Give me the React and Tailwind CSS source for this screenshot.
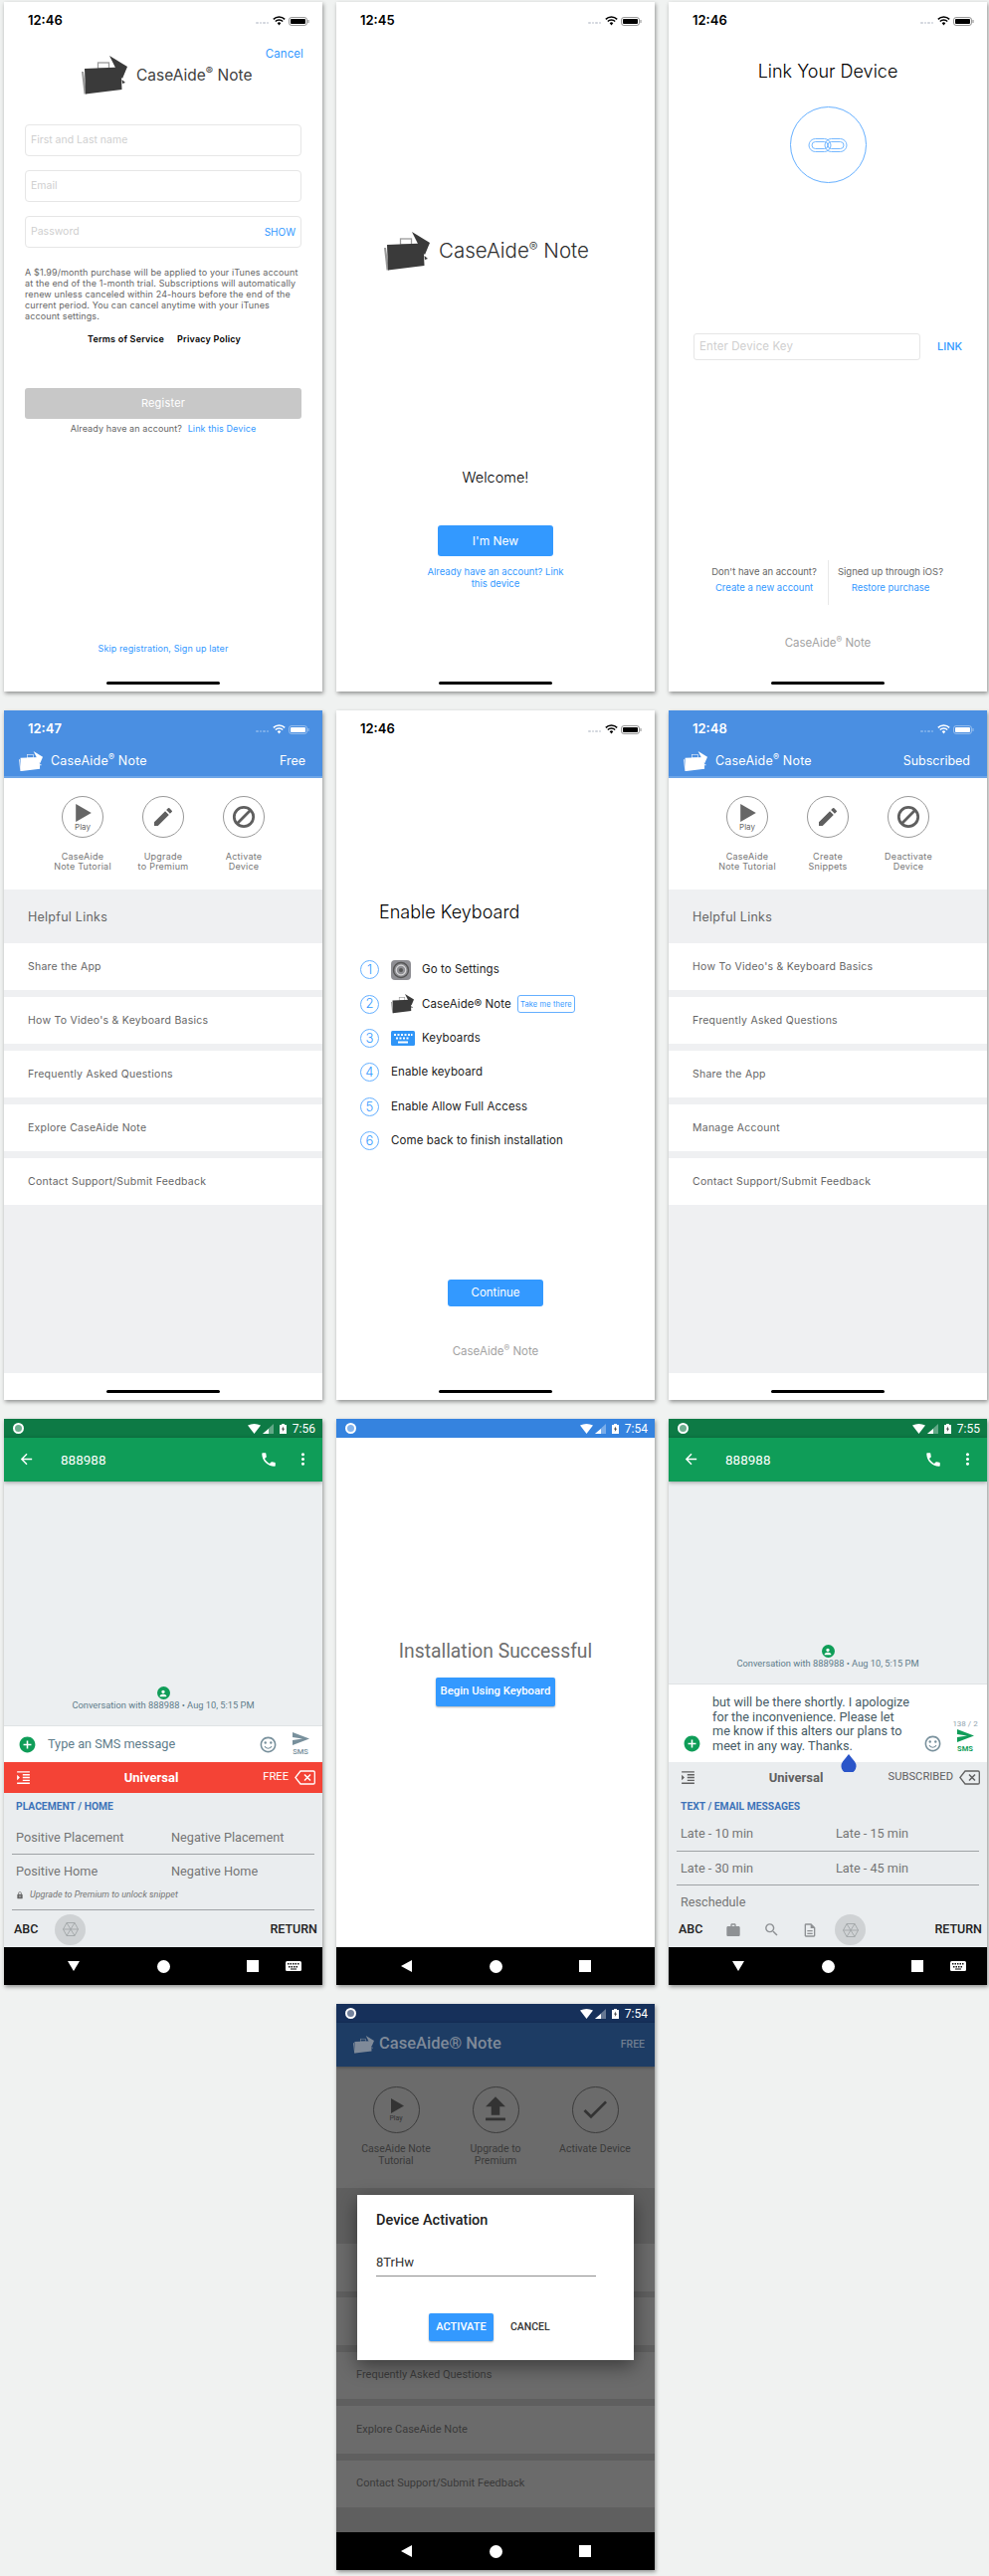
import {
  MdArrowBack,
  MdPhone,
  MdMoreVert,
  MdAddCircle,
  MdSend,
  MdLock,
  MdWork,
  MdSearch,
  MdOutlineDescription,
  MdEdit,
  MdFileUpload,
  MdCheck,
  MdPerson,
  MdFormatIndentIncrease,
  MdOutlineSentimentSatisfiedAlt,
} from "react-icons/md";

const ios = "font-['Inter','Liberation_Sans',sans-serif]";
const droid = "font-['Roboto','Liberation_Sans',sans-serif]";

function Logo({ color = "#3a3a3a", back = "#9a9a9a", w = 46 }) {
  return (
    <svg width={w} height={(w * 39) / 46} viewBox="0 0 46 39" className="shrink-0">
      <polygon points="28,0 46,11 41,23 38,20" fill={color} />
      <polygon points="40.5,24 44,27 41,28" fill={color} />
      <rect x="16.5" y="7" width="11" height="6" fill="none" stroke={back} strokeWidth="1.3" />
      <polygon points="0,16 2,16 5,38.5 2.5,38.5" fill={back} />
      <polygon points="3,13 39.5,11.5 40.5,34 4,38.5" fill={color} />
    </svg>
  );
}

function IosStatus({ time, dark = true }) {
  const c = dark ? "#000" : "#fff";
  return (
    <div className={`flex h-[38px] shrink-0 items-center pl-[24px] pr-[13px] ${ios}`}>
      <span className="text-[13px] font-semibold" style={{ color: c }}>
        {time}
      </span>
      <div className="ml-auto flex items-center">
        <div className="mt-[3px] flex gap-[1px]">
          {[0, 1, 2, 3].map((i) => (
            <span key={i} className={`h-[2px] w-[2.5px] rounded-full ${dark ? "bg-gray-300" : "bg-white/30"}`} />
          ))}
        </div>
        <svg width="13" height="10" viewBox="0 0 13 10" className="ml-[4px]">
          <path d="M0.8 3.4a8 8 0 0 1 11.4 0M2.8 5.5a5.2 5.2 0 0 1 7.4 0" fill="none" stroke={c} strokeWidth="1.5" />
          <path d="M4.7 7.2a2.6 2.6 0 0 1 3.6 0L6.5 9.4z" fill={c} />
        </svg>
        <svg width="21" height="9" viewBox="0 0 21 9" className="ml-[3px]">
          <rect x="0.5" y="0.5" width="18" height="8" rx="2.5" fill="none" stroke={c} strokeOpacity="0.4" />
          <rect x="2" y="2" width="15" height="5" rx="1" fill={c} />
          <rect x="19.4" y="3" width="1.2" height="3" rx="0.5" fill={c} fillOpacity="0.4" />
        </svg>
      </div>
    </div>
  );
}

function HomeBar() {
  return <div className="mx-auto mb-[7px] mt-auto h-[3px] w-[114px] shrink-0 rounded-full bg-black" />;
}

function Screen({ h, children, className = "" }) {
  return (
    <div
      className={`relative flex w-[320px] flex-col overflow-hidden bg-white shadow-[1px_2px_4px_rgba(0,0,0,0.4)] ${className}`}
      style={{ height: h }}
    >
      {children}
    </div>
  );
}

function TextInput({ label, right, className = "" }) {
  return (
    <div className={`flex h-[32px] items-center rounded-[4px] border border-[#e6e6e6] px-[5px] text-[10.5px] text-[#cfcfcf] ${className}`}>
      {label}
      {right}
    </div>
  );
}

function RegisterScreen() {
  return (
    <Screen h={693} className={ios}>
      <IosStatus time="12:46" />
      <div className="mt-[6px] h-[16px] pr-[19px] text-right text-[11.5px] leading-[16px] tracking-[0.1px] text-[#3399ff]">Cancel</div>
      <div className="-mt-[6px] ml-[78px] flex items-center gap-[9px]">
        <Logo />
        <span className="text-[15.5px] text-[#3f3f3f]">
          CaseAide<sup className="text-[11px]">®</sup> Note
        </span>
      </div>
      <div className="mt-[30px] flex flex-col gap-[14px] px-[21px]">
        <TextInput label="First and Last name" />
        <TextInput label="Email" />
        <TextInput
          label="Password"
          right={<span className="ml-auto text-[10px] text-[#3399ff]">SHOW</span>}
        />
      </div>
      <p className="mt-[19px] whitespace-nowrap px-[21px] text-[9px] leading-[11px] tracking-[0.12px] text-[#666]">
        A $1.99/month purchase will be applied to your iTunes account
        <br />
        at the end of the 1-month trial. Subscriptions will automatically
        <br />
        renew unless canceled within 24-hours before the end of the
        <br />
        current period. You can cancel anytime with your iTunes
        <br />
        account settings.
      </p>
      <div className="mt-[11.5px] flex h-[11px] pl-[84px] text-[9px] font-semibold leading-[11px] tracking-[0.2px] text-black">
        <span>Terms of Service</span>
        <span className="ml-[13px]">Privacy Policy</span>
      </div>
      <div className="mx-[21px] mt-[44.5px] flex h-[30.5px] items-center justify-center rounded-[3px] bg-[#c8c8c8] text-[11px] tracking-[0.2px] text-white">
        Register
      </div>
      <div className="mt-[4.5px] h-[12px] text-center text-[9px] leading-[12px] tracking-[0.1px] text-[#666]">
        Already have an account? <span className="ml-[3px] text-[#3399ff]">Link this Device</span>
      </div>
      <div className="mt-[209px] h-[12px] text-center text-[9px] leading-[12px] tracking-[0.1px] text-[#3399ff]">
        Skip registration, Sign up later
      </div>
      <HomeBar />
    </Screen>
  );
}

function WelcomeScreen() {
  return (
    <Screen h={693} className={ios}>
      <IosStatus time="12:45" />
      <div className="ml-[48px] mt-[193px] flex items-center gap-[9px]">
        <Logo />
        <span className="text-[20.5px] font-light text-[#2e2e2e]">
          CaseAide<sup className="text-[13px]">®</sup> Note
        </span>
      </div>
      <div className="mt-[198px] h-[20px] text-center text-[14.5px] font-light leading-[20px] text-black">Welcome!</div>
      <div className="mx-auto mt-[38px] flex h-[31px] w-[116px] items-center justify-center rounded-[3px] bg-[#3399ff] text-[12px] text-white">
        I'm New
      </div>
      <div className="mx-auto mt-[10px] w-[150px] text-center text-[9.5px] leading-[11.5px] text-[#3399ff]">
        Already have an account? Link
        <br />
        this device
      </div>
      <HomeBar />
    </Screen>
  );
}

function LinkScreen() {
  return (
    <Screen h={693} className={ios}>
      <IosStatus time="12:46" />
      <div className="mt-[20px] h-[24px] text-center text-[18px] font-light leading-[24px] text-black">Link Your Device</div>
      <div className="mx-auto mt-[23px] flex h-[77px] w-[77px] items-center justify-center rounded-full border border-[#66b0ff]">
        <svg width="40" height="18" viewBox="0 0 40 18" fill="none" stroke="#66b0ff" strokeWidth="0.9">
          <rect x="1" y="2.5" width="22" height="13" rx="6.5" />
          <rect x="4" y="5.5" width="16" height="7" rx="3.5" />
          <rect x="17" y="2.5" width="22" height="13" rx="6.5" />
          <rect x="20" y="5.5" width="16" height="7" rx="3.5" />
        </svg>
      </div>
      <div className="ml-[25px] mt-[151px] flex items-center gap-[17px]">
        <div className="flex h-[27px] w-[228px] items-center rounded-[3px] border border-[#e6e6e6] px-[5px] text-[11.5px] tracking-[0.1px] text-[#cfcfcf]">
          Enter Device Key
        </div>
        <span className="text-[11px] font-medium text-[#3399ff]">LINK</span>
      </div>
      <div className="mt-[201px] flex h-[45px] text-[9.5px] leading-[12px]">
        <div className="ml-[32px] w-[128px] pt-[6px] text-center">
          <div className="text-[#666]">Don't have an account?</div>
          <div className="mt-[4px] text-[#3399ff]">Create a new account</div>
        </div>
        <div className="w-[1px] bg-[#e8e8e8]" />
        <div className="w-[124px] pt-[6px] text-center">
          <div className="text-[#666]">Signed up through iOS?</div>
          <div className="mt-[4px] text-[#3399ff]">Restore purchase</div>
        </div>
      </div>
      <div className="mt-[31px] h-[14px] text-center text-[11.5px] leading-[14px] text-[#a3a3a3]">
        CaseAide<sup className="text-[8.5px]">®</sup> Note
      </div>
      <HomeBar />
    </Screen>
  );
}

function PlayCircle({ size = 42, small = false, line = "#999", fill = "#666" }) {
  return (
    <div
      className="flex flex-col items-center justify-center rounded-full border"
      style={{ width: size, height: size, borderColor: line }}
    >
      <svg width={small ? 13 : 16} height={small ? 15 : 18} viewBox="0 0 13 15" className="ml-[2px] mt-[2px]">
        <polygon points="0,0 13,7.5 0,15" fill={fill} />
      </svg>
      <span className={`${small ? "text-[7px]" : "text-[8px]"} leading-[10px]`} style={{ color: fill }}>
        Play
      </span>
    </div>
  );
}

function RoundIcon({ children, size = 42, line = "#999" }) {
  return (
    <div
      className="flex items-center justify-center rounded-full border"
      style={{ width: size, height: size, borderColor: line }}
    >
      {children}
    </div>
  );
}

function BlockIcon() {
  return (
    <svg width="24" height="24" viewBox="0 0 26 26" fill="none" stroke="#5f5f5f" strokeWidth="3">
      <circle cx="13" cy="13" r="10.5" />
      <line x1="20" y1="6" x2="6" y2="20" />
    </svg>
  );
}

function HomeScreen({ time, badge, tools, links }) {
  return (
    <Screen h={693} className={ios}>
      <div className="h-[68px] shrink-0 border-b-[2px] border-[#6ea6e8] bg-[#4a8fe2]">
        <IosStatus time={time} dark={false} />
        <div className="flex h-[26px] items-center pl-[15px] pr-[17px] text-white">
          <Logo color="#fff" back="#dfe9f7" w={24} />
          <span className="ml-[8px] text-[12.5px] tracking-[0.2px]">
            CaseAide<sup className="text-[9px]">®</sup> Note
          </span>
          <span className="ml-auto text-[12.5px]">{badge}</span>
        </div>
      </div>
      <div className="flex h-[112px] shrink-0 justify-center pt-[18px]">
        {tools.map((tool) => (
          <div key={tool.label[0]} className="flex w-[81px] flex-col items-center">
            {tool.icon}
            <div className="mt-[13.5px] whitespace-nowrap text-center text-[9px] leading-[10.7px] tracking-[0.25px] text-[#777]">
              {tool.label[0]}
              <br />
              {tool.label[1]}
            </div>
          </div>
        ))}
      </div>
      <div className="flex flex-1 flex-col bg-[#eff0f2]">
        <div className="flex h-[54px] shrink-0 items-center pl-[24px] pt-[2px] text-[12.5px] tracking-[0.25px] text-[#666]">
          Helpful Links
        </div>
        {links.map((link) => (
          <div
            key={link}
            className="mb-[7.5px] flex h-[46.5px] shrink-0 items-center bg-white pl-[24px] pt-[2px] text-[10.5px] tracking-[0.25px] text-[#666]"
          >
            {link}
          </div>
        ))}
      </div>
      <div className="flex h-[27px] shrink-0 bg-white">
        <HomeBar />
      </div>
    </Screen>
  );
}

function StepBadge({ n }) {
  return (
    <div className="flex h-[19px] w-[19px] shrink-0 items-center justify-center rounded-full border border-[#66b0ff] text-[13px] font-light text-[#3399ff]">
      {n}
    </div>
  );
}

function SettingsIcon() {
  return (
    <svg width="20" height="20" viewBox="0 0 20 20" fill="none">
      <rect width="20" height="20" rx="4" fill="#8e8e93" />
      <circle cx="10" cy="10" r="7.5" stroke="#555" strokeWidth="1.4" />
      <circle cx="10" cy="10" r="4.8" stroke="#d8d8d8" strokeWidth="1.2" />
      <circle cx="10" cy="10" r="2" fill="#555" />
    </svg>
  );
}

function KeysIcon() {
  return (
    <svg width="24" height="15" viewBox="0 0 24 15">
      <rect width="24" height="15" rx="1.5" fill="#2f95f7" />
      <path d="M3 3h2v2H3zM6.5 3h2v2h-2zM10 3h2v2h-2zM13.5 3h2v2h-2zM17 3h2v2h-2zM20 3h1.5v2H20zM5 6.5h2v2H5zM8.5 6.5h2v2h-2zM12 6.5h2v2h-2zM15.5 6.5h2v2h-2zM7 10.5h10v2H7z" fill="#fff" />
    </svg>
  );
}

function KeyboardGuideScreen() {
  const steps = [
    { text: "Go to Settings", icon: <SettingsIcon /> },
    { text: "CaseAide® Note", icon: <Logo w={23} />, tag: true },
    { text: "Keyboards", icon: <KeysIcon /> },
    { text: "Enable keyboard" },
    { text: "Enable Allow Full Access" },
    { text: "Come back to finish installation" },
  ];
  return (
    <Screen h={693} className={ios}>
      <IosStatus time="12:46" />
      <div className="ml-[43px] mt-[153px] h-[24px] text-[18px] font-light leading-[24px] text-black">Enable Keyboard</div>
      <div className="ml-[24px] mt-[28.6px] flex flex-col">
        {steps.map((step, i) => (
          <div key={step.text} className="flex h-[34.4px] items-center text-[11.5px] tracking-[0.1px] text-[#222]">
            <StepBadge n={i + 1} />
            <div className="ml-[12px] flex items-center">
              {step.icon && <div className="w-[31px] shrink-0">{step.icon}</div>}
              <span>{step.text}</span>
              {step.tag && (
                <span className="ml-[6px] flex h-[18px] w-[58px] items-center justify-center rounded-[3px] border border-[#66b0ff] text-[7.5px] text-[#3399ff]">
                  Take me there
                </span>
              )}
            </div>
          </div>
        ))}
      </div>
      <div className="mx-auto mt-[122px] flex h-[27px] w-[96px] items-center justify-center rounded-[3px] bg-[#3399ff] text-[11.5px] text-white">
        Continue
      </div>
      <div className="mt-[38px] h-[14px] text-center text-[11.5px] leading-[14px] text-[#a3a3a3]">
        CaseAide<sup className="text-[8.5px]">®</sup> Note
      </div>
      <HomeBar />
    </Screen>
  );
}

function DroidStatus({ time, bg }) {
  return (
    <div className={`flex h-[19px] shrink-0 items-center pl-[9px] pr-[7px] ${bg} ${droid}`}>
      <div className="h-[11px] w-[11px] rounded-full border-[2.5px] border-white bg-white/40" />
      <div className="ml-auto flex items-center">
        <svg width="13" height="10" viewBox="0 0 13 10">
          <path d="M0 1.5Q6.5 -1.5 13 1.5L6.5 10z" fill="#fff" />
        </svg>
        <svg width="11" height="10" viewBox="0 0 11 10" className="ml-[2px]">
          <polygon points="11,0 11,10 0,10" fill="#fff" fillOpacity="0.35" />
          <polygon points="6,5 6,10 0,10" fill="#fff" />
        </svg>
        <svg width="7" height="10" viewBox="0 0 7 10" className="ml-[6px]">
          <path d="M2 0h3v1h2v9H0V1h2z" fill="#fff" />
          <path d="M4 2.5 2 5.5h1.3L2.8 8l2.2-3.2H3.700z" fill="#333" />
        </svg>
        <span className="ml-[6px] text-[12px] text-white">{time}</span>
      </div>
    </div>
  );
}

function DroidNav({ keyboard = false }) {
  return (
    <div className="flex h-[38px] shrink-0 items-center bg-black">
      <div className="ml-[64px] flex w-[12px] justify-center">
        {keyboard ? (
          <svg width="12" height="10" viewBox="0 0 12 10">
            <polygon points="0,0 12,0 6,10" fill="#fff" />
          </svg>
        ) : (
          <svg width="11" height="12" viewBox="0 0 11 12">
            <polygon points="11,0 11,12 0,6" fill="#fff" />
          </svg>
        )}
      </div>
      <div className="ml-[77.5px] h-[13px] w-[13px] rounded-full bg-white" />
      <div className="ml-[77.5px] h-[12px] w-[12px] bg-white" />
      {keyboard && (
        <svg width="16" height="10" viewBox="0 0 16 10" className="ml-[27px]">
          <rect width="16" height="10" rx="1.5" fill="#fff" />
          <path d="M2 2h1.5v1.5H2zM4.5 2H6v1.5H4.500zM7 2h1.5v1.5H7zM9.500 2H11v1.5H9.500zM12 2h1.5v1.5H12zM3 5h1.5v1.5H3zM5.500 5H7v1.5H5.500zM8 5h1.5v1.5H8zM10.500 5H12v1.5h-1.5zM5 7.500h6v1H5z" fill="#111" />
        </svg>
      )}
    </div>
  );
}

function Backspace({ color }) {
  return (
    <svg width="21" height="15" viewBox="0 0 21 15" fill="none" stroke={color} strokeWidth="1.3">
      <path d="M6 1h13a1.3 1.3 0 0 1 1.3 1.3v10.400A1.3 1.3 0 0 1 19 14H6L0.900 7.500z" />
      <path d="M10 4.500l6 6M16 4.500l-6 6" strokeWidth="1.5" />
    </svg>
  );
}

function Hex() {
  return (
    <div className="flex h-[31px] w-[31px] shrink-0 items-center justify-center rounded-full bg-[#cfd2d4]">
      <svg width="16" height="14" viewBox="0 0 16 14" fill="none" stroke="#a2a6a8" strokeWidth="0.9">
        <polygon points="4,0.5 12,0.5 15.5,7 12,13.5 4,13.5 0.5,7" />
        <path d="M4 0.5 12 13.5M12 0.5 4 13.5M0.5 7h15" />
      </svg>
    </div>
  );
}

function Conversation() {
  return (
    <div className="flex flex-1 flex-col items-center justify-end bg-[#eceff1] pb-[14px]">
      <div className="flex h-[13px] w-[13px] items-center justify-center rounded-full bg-[#0f9d58]">
        <MdPerson size={10} color="#fff" />
      </div>
      <div className="h-[12px] text-[9.3px] leading-[12px] text-[#607d8b]">Conversation with 888988 • Aug 10, 5:15 PM</div>
    </div>
  );
}

function SmsHeader() {
  return (
    <div className="z-10 flex h-[43.5px] shrink-0 items-center bg-[#0f9d58] pl-[14px] pr-[10px] shadow-[0_1px_4px_rgba(0,0,0,0.35)]">
      <MdArrowBack size={17} color="#fff" />
      <span className="ml-[26px] text-[13.5px] text-white">888988</span>
      <MdPhone size={18} color="#fff" className="ml-auto" />
      <MdMoreVert size={19} color="#fff" className="ml-[16px]" />
    </div>
  );
}

function SnippetCell({ text }) {
  return <div className="h-[16px] text-[12.7px] leading-[16px] text-[#757575]">{text}</div>;
}

function FreeKeyboardScreen() {
  return (
    <Screen h={569} className={droid}>
      <DroidStatus time="7:56" bg="bg-[#0d7a45]" />
      <SmsHeader />
      <Conversation />
      <div className="flex h-[37px] shrink-0 items-center border-t border-[#dfe3e5] bg-white pl-[14px] pr-[13px]">
        <MdAddCircle size={19} color="#0f9d58" />
        <span className="ml-[11px] text-[12.7px] text-[#607d8b]">Type an SMS message</span>
        <MdOutlineSentimentSatisfiedAlt size={19} color="#78909c" className="ml-auto" />
        <div className="ml-[14px] flex w-[18px] flex-col items-center">
          <svg width="17" height="13" viewBox="0 0 17 13">
            <polygon points="0,0 17,6.5 0,13 0,8 10,6.5 0,5" fill="#78909c" />
          </svg>
          <span className="mt-[2px] text-[7.5px] font-medium leading-[9px] text-[#78909c]">SMS</span>
        </div>
      </div>
      <div className="flex h-[31px] shrink-0 items-center bg-[#f44336] pl-[11px] pr-[7px] text-white">
        <MdFormatIndentIncrease size={17} />
        <span className="ml-[85px] w-[70px] text-center text-[13px] font-bold">Universal</span>
        <span className="ml-auto text-[11.2px]">FREE</span>
        <div className="ml-[6px]">
          <Backspace color="#fff" />
        </div>
      </div>
      <div className="flex h-[155px] shrink-0 flex-col bg-[#eaedef] pt-[8px]">
        <div className="h-[12px] pl-[12px] text-[10.3px] font-bold leading-[12px] text-[#3d73b9]">PLACEMENT / HOME</div>
        <div className="mt-[16.5px] grid grid-cols-[156px_1fr] pl-[12px]">
          <SnippetCell text="Positive Placement" />
          <SnippetCell text="Negative Placement" />
        </div>
        <div className="mx-[8px] mt-[8.5px] h-[1px] shrink-0 bg-[#9ea2a5]" />
        <div className="mt-[9px] grid grid-cols-[156px_1fr] pl-[12px]">
          <SnippetCell text="Positive Home" />
          <SnippetCell text="Negative Home" />
        </div>
        <div className="mt-[9.5px] flex h-[12px] items-center pl-[12px] text-[9px] italic text-[#757575]">
          <MdLock size={8} color="#666" />
          <span className="ml-[6px]">Upgrade to Premium to unlock snippet</span>
        </div>
        <div className="mx-[8px] mt-[8px] h-[1px] shrink-0 bg-[#9ea2a5]" />
        <div className="mt-[4px] flex h-[31px] items-center pl-[10px] pr-[5px] text-[12.5px] font-medium text-[#212121]">
          <span>ABC</span>
          <div className="ml-[17px]">
            <Hex />
          </div>
          <span className="ml-auto">RETURN</span>
        </div>
      </div>
      <DroidNav keyboard />
    </Screen>
  );
}

function SuccessScreen() {
  return (
    <Screen h={569} className={droid}>
      <DroidStatus time="7:54" bg="bg-[#3583df]" />
      <div className="flex flex-1 flex-col items-center">
        <div className="mt-[202px] h-[26px] text-[19.3px] leading-[26px] text-[#6e6e6e]">Installation Successful</div>
        <div className="mt-[13px] flex h-[28.5px] w-[120px] items-center justify-center rounded-[2px] bg-[#3399ff] text-[11.3px] font-medium text-white shadow-[0_1px_2px_rgba(0,0,0,0.3)]">
          Begin Using Keyboard
        </div>
      </div>
      <DroidNav />
    </Screen>
  );
}

function SubscribedKeyboardScreen() {
  return (
    <Screen h={569} className={droid}>
      <DroidStatus time="7:55" bg="bg-[#0d7a45]" />
      <SmsHeader />
      <Conversation />
      <div className="relative flex h-[79px] shrink-0 border-t border-[#dfe3e5] bg-white pl-[14px] pr-[13px]">
        <MdAddCircle size={19} color="#0f9d58" className="mt-[50px]" />
        <div className="ml-[11px] mt-[11px] whitespace-nowrap text-[12.7px] leading-[14.6px] text-[#455a64]">
          but will be there shortly. I apologize
          <br />
          for the inconvenience. Please let
          <br />
          me know if this alters our plans to
          <br />
          meet in any way. Thanks.
        </div>
        <MdOutlineSentimentSatisfiedAlt size={19} color="#78909c" className="ml-auto mt-[50px]" />
        <div className="ml-[14px] flex w-[18px] flex-col items-center pt-[35px]">
          <span className="whitespace-nowrap text-[8px] leading-[9px] text-[#90a4ae]">138 / 2</span>
          <svg width="17" height="13" viewBox="0 0 17 13" className="mt-[1px] shrink-0">
            <polygon points="0,0 17,6.5 0,13 0,8 10,6.5 0,5" fill="#0f9d58" />
          </svg>
          <span className="mt-[2px] text-[7.5px] font-bold leading-[9px] text-[#0f9d58]">SMS</span>
        </div>
        {/* text cursor handle, sits over the edge of the input */}
        <svg width="16" height="18" viewBox="0 0 16 18" className="absolute left-[173px] top-[70px] z-10">
          <path d="M8 0 14 7.5A7.5 7.5 0 1 1 2 7.5z" fill="#2a55c9" />
        </svg>
      </div>
      <div className="flex h-[31px] shrink-0 items-center bg-[#eaedef] pl-[11px] pr-[7px] text-[#616161]">
        <MdFormatIndentIncrease size={17} />
        <span className="ml-[65px] w-[70px] text-center text-[13px] font-bold">Universal</span>
        <span className="ml-auto text-[11.2px]">SUBSCRIBED</span>
        <div className="ml-[6px]">
          <Backspace color="#616161" />
        </div>
      </div>
      <div className="flex h-[155px] shrink-0 flex-col bg-[#eaedef] pt-[8px]">
        <div className="h-[12px] pl-[12px] text-[10.3px] font-bold leading-[12px] text-[#3d73b9]">TEXT / EMAIL MESSAGES</div>
        <div className="mt-[12.5px] grid grid-cols-[156px_1fr] pl-[12px]">
          <SnippetCell text="Late - 10 min" />
          <SnippetCell text="Late - 15 min" />
        </div>
        <div className="mx-[8px] mt-[9px] h-[1px] shrink-0 bg-[#9ea2a5]" />
        <div className="mt-[9px] grid grid-cols-[156px_1fr] pl-[12px]">
          <SnippetCell text="Late - 30 min" />
          <SnippetCell text="Late - 45 min" />
        </div>
        <div className="mx-[8px] mt-[8.5px] h-[1px] shrink-0 bg-[#9ea2a5]" />
        <div className="mt-[9px] pl-[12px]">
          <SnippetCell text="Reschedule" />
        </div>
        <div className="mt-[4px] flex h-[31px] items-center pl-[10px] pr-[5px] text-[12.5px] font-medium text-[#212121]">
          <span>ABC</span>
          <MdWork size={16} color="#8e9194" className="ml-[23px]" />
          <MdSearch size={17} color="#8e9194" className="ml-[22px]" />
          <MdOutlineDescription size={16} color="#8e9194" className="ml-[22px]" />
          <div className="ml-[17px]">
            <Hex />
          </div>
          <span className="ml-auto">RETURN</span>
        </div>
      </div>
      <DroidNav keyboard />
    </Screen>
  );
}

function ActivationScreen() {
  const tools = [
    { label: ["CaseAide Note", "Tutorial"], icon: <PlayCircle size={47} small line="#3c3c3c" fill="#333" /> },
    {
      label: ["Upgrade to", "Premium"],
      icon: (
        <RoundIcon size={47} line="#3c3c3c">
          <MdFileUpload size={34} color="#333" />
        </RoundIcon>
      ),
    },
    {
      label: ["Activate Device", ""],
      icon: (
        <RoundIcon size={47} line="#3c3c3c">
          <MdCheck size={32} color="#333" />
        </RoundIcon>
      ),
    },
  ];
  const links = ["", "", "Frequently Asked Questions", "Explore CaseAide Note", "Contact Support/Submit Feedback"];
  return (
    <Screen h={569} className={droid}>
      <DroidStatus time="7:54" bg="bg-[#16305a]" />
      <div className="z-10 flex h-[43.5px] shrink-0 items-center bg-[#1d3c64] pl-[17px] pr-[10px] shadow-[0_1px_3px_rgba(0,0,0,0.3)]">
        <Logo color="#7f8a99" back="#7f8a99" w={21} />
        <span className="ml-[5px] text-[16.5px] font-medium text-[#7f8a99]">CaseAide® Note</span>
        <span className="ml-auto text-[10.5px] font-medium text-[#6f7d90]">FREE</span>
      </div>
      <div className="flex h-[122px] shrink-0 justify-center bg-[#6b6b6b] pt-[20px]">
        {tools.map((tool) => (
          <div key={tool.label[0]} className="flex w-[100px] flex-col items-center">
            {tool.icon}
            <div className="mt-[10px] whitespace-nowrap text-center text-[10.5px] leading-[12.5px] text-[#3a3a3a]">
              {tool.label[0]}
              <br />
              {tool.label[1]}
            </div>
          </div>
        ))}
      </div>
      <div className="flex flex-1 flex-col bg-[#5f5f5f] pt-[56.5px]">
        {links.map((link, i) => (
          <div
            key={i}
            className="mb-[6.9px] flex h-[47.5px] shrink-0 items-center bg-[#6b6b6b] pl-[20px] text-[11px] text-[#3a3a3a]"
          >
            {link}
          </div>
        ))}
      </div>
      <DroidNav />
      {/* modal floats over the dimmed page */}
      <div className="absolute left-[21px] top-[192px] z-20 flex h-[166px] w-[278px] flex-col bg-white pl-[19px] shadow-[0_6px_18px_rgba(0,0,0,0.45)]">
        <div className="mt-[16px] h-[20px] text-[14.5px] font-medium leading-[20px] text-[#212121]">Device Activation</div>
        <div className="mt-[23px] h-[18px] text-[13px] leading-[18px] text-[#333]">8TrHw</div>
        <div className="mt-[4px] h-[1px] w-[221px] bg-[#8e8e8e]" />
        <div className="mt-[37px] flex items-center">
          <div className="ml-[53px] flex h-[28px] w-[65px] items-center justify-center rounded-[2px] bg-[#3399ff] text-[11px] font-medium text-white shadow-[0_1px_2px_rgba(0,0,0,0.3)]">
            ACTIVATE
          </div>
          <span className="ml-[17px] text-[10.5px] font-medium text-[#333]">CANCEL</span>
        </div>
      </div>
    </Screen>
  );
}

export default function App() {
  const freeTools = [
    { label: ["CaseAide", "Note Tutorial"], icon: <PlayCircle /> },
    { label: ["Upgrade", "to Premium"], icon: <RoundIcon><MdEdit size={24} color="#5f5f5f" /></RoundIcon> },
    { label: ["Activate", "Device"], icon: <RoundIcon><BlockIcon /></RoundIcon> },
  ];
  const paidTools = [
    { label: ["CaseAide", "Note Tutorial"], icon: <PlayCircle /> },
    { label: ["Create", "Snippets"], icon: <RoundIcon><MdEdit size={24} color="#5f5f5f" /></RoundIcon> },
    { label: ["Deactivate", "Device"], icon: <RoundIcon><BlockIcon /></RoundIcon> },
  ];
  return (
    <div className="h-[2589px] w-[994px] overflow-hidden bg-[#f0f2f1] pl-[4px] pt-[2px]">
      <div className="grid grid-cols-[320px_320px_320px] gap-x-[14px] gap-y-[19px]">
        <RegisterScreen />
        <WelcomeScreen />
        <LinkScreen />
        <HomeScreen
          time="12:47"
          badge="Free"
          tools={freeTools}
          links={[
            "Share the App",
            "How To Video's & Keyboard Basics",
            "Frequently Asked Questions",
            "Explore CaseAide Note",
            "Contact Support/Submit Feedback",
          ]}
        />
        <KeyboardGuideScreen />
        <HomeScreen
          time="12:48"
          badge="Subscribed"
          tools={paidTools}
          links={[
            "How To Video's & Keyboard Basics",
            "Frequently Asked Questions",
            "Share the App",
            "Manage Account",
            "Contact Support/Submit Feedback",
          ]}
        />
        <FreeKeyboardScreen />
        <SuccessScreen />
        <SubscribedKeyboardScreen />
        <div className="col-start-2">
          <ActivationScreen />
        </div>
      </div>
    </div>
  );
}
